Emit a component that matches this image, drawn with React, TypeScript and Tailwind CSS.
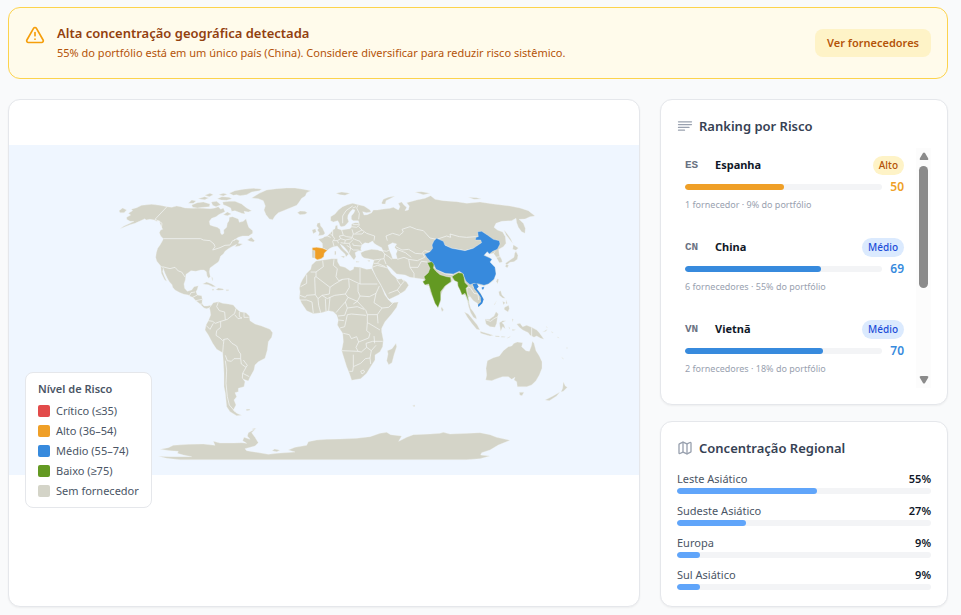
import { AlertTriangle, Map } from 'lucide-react';
import clsx from 'clsx';

// ==========================================================================
// Types
// ==========================================================================

interface CountryRisk {
  code: string;
  name: string;
  score: number;
  level: 'Alto' | 'Médio';
  detail: string;
}

interface RegionShare {
  name: string;
  share: number;
}

// ==========================================================================
// Data
// ==========================================================================

const countries: CountryRisk[] = [
  { code: 'ES', name: 'Espanha', score: 50, level: 'Alto', detail: '1 fornecedor · 9% do portfólio' },
  { code: 'CN', name: 'China', score: 69, level: 'Médio', detail: '6 fornecedores · 55% do portfólio' },
  { code: 'VN', name: 'Vietnã', score: 70, level: 'Médio', detail: '2 fornecedores · 18% do portfólio' },
];

const regions: RegionShare[] = [
  { name: 'Leste Asiático', share: 55 },
  { name: 'Sudeste Asiático', share: 27 },
  { name: 'Europa', share: 9 },
  { name: 'Sul Asiático', share: 9 },
];

const legend = [
  { label: 'Crítico (≤35)', color: 'bg-[#e24b4a]' },
  { label: 'Alto (36–54)', color: 'bg-[#ef9f27]' },
  { label: 'Médio (55–74)', color: 'bg-[#378add]' },
  { label: 'Baixo (≥75)', color: 'bg-[#639922]' },
  { label: 'Sem fornecedor', color: 'bg-[#d4d4c8]' },
];

const levelStyles = {
  Alto: { badge: 'bg-[#fef3c7] text-[#b45309]', bar: 'bg-[#ef9f27]', score: 'text-[#ef9f27]' },
  Médio: { badge: 'bg-[#dbeafe] text-[#1d4ed8]', bar: 'bg-[#378add]', score: 'text-[#378add]' },
};

// ==========================================================================
// World map
// ==========================================================================

const northAmerica = [
  'M50,112 62,105 55,100 68,92 64,88 80,83 95,76 125,73 150,76 171,80 185,82 200,78 212,80 225,84 250,85 262,84 280,85 300,86 315,84 325,80 332,88 340,84 345,95 338,98 328,103 318,110 305,115 298,124 300,135 308,138 322,142 330,148 332,160 336,164 342,160 341,150 350,142 352,130 357,122 358,112 368,110 385,117 388,127 400,124 408,116 412,130 416,142 428,152 428,160 416,168 398,168 385,172 372,180 380,178 388,182 385,190 398,192 388,198 375,200 380,193 365,200 355,206 345,214 340,222 332,228 328,240 325,246 312,255 300,264 298,275 301,290 296,295 291,288 289,275 282,270 272,270 258,274 243,272 235,278 228,283 226,300 222,312 224,325 232,334 245,330 252,320 265,317 262,328 258,335 262,345 275,347 277,358 276,370 282,378 292,378 302,376 302,382 290,386 282,384 270,372 258,362 248,352 240,349 235,345 222,343 210,338 195,330 188,322 186,314 178,305 172,295 165,280 160,266 152,258 140,243 137,232 139,218 143,205 150,195 157,183 160,176 152,168 148,158 152,150 158,148 154,140 150,130 148,122 140,124 133,120 120,118 108,120 105,116 88,124 75,130 60,134 45,140 30,146 42,138 60,130 72,124 60,124 50,118Z',
  'M152,258 160,264 158,275 163,288 170,304 164,300 158,288 154,280Z',
  'M245,75 262,68 280,66 300,72 298,80 280,82 262,84 248,82Z',
  'M235,70 245,60 258,63 250,70Z',
  'M264,56 284,50 296,54 284,59Z',
  'M284,46 300,40 310,44 298,50Z',
  'M304,66 320,64 332,74 318,80 308,76Z',
  'M322,56 336,50 357,52 366,56 350,61 334,60Z',
  'M326,44 340,40 352,43 340,48Z',
  'M338,66 358,64 375,64 395,72 410,84 425,92 415,96 402,94 405,102 395,100 385,96 375,92 365,94 362,84 350,78 340,74Z',
  'M358,40 375,32 400,28 430,25 455,27 448,32 425,36 410,44 390,47 380,44 370,46Z',
  'M340,104 352,96 364,102 352,107Z',
  'M412,180 424,172 434,182 430,186 418,183Z',
  'M27,92 38,84 50,90 42,98 30,98Z',
  'M278,312 290,306 305,312 318,320 308,320 295,314Z',
  'M317,329 325,324 338,326 342,330 325,331Z',
  'M348,329 356,329 356,332 348,332Z',
  'M306,328 312,328 312,331 306,331Z',
  'M305,290 308,294 308,302 306,300Z',
  // Greenland
  'M425,54 448,40 470,30 500,26 530,24 555,24 580,28 602,32 590,38 586,48 575,55 566,68 560,76 540,84 520,92 505,98 495,108 488,119 478,117 468,104 462,90 466,78 460,62 445,56Z',
];

const northAmericaBorders =
  'M171,80 135,118 148,124 156,130 154,145M160,176H272L280,180 300,182 312,192 315,200 308,210 330,203 345,196 360,195 368,182 375,180M157,260 180,266 195,262 205,273 215,276 225,291M238,348 243,338 255,336M248,352 262,345M258,362 276,358M270,372 278,372';

const southAmerica = [
  'M58,54 70,38 85,35 98,40 115,42 130,45 138,55 150,65 168,68 178,78 180,92 195,102 215,108 240,118 248,128 245,142 235,155 232,180 225,205 205,215 195,225 192,240 180,262 175,273 160,268 157,264 165,275 162,290 145,295 145,305 135,308 140,320 132,330 138,345 130,360 140,370 155,376 140,377 120,365 110,350 108,330 106,310 102,290 102,250 100,215 98,188 80,178 68,160 55,135 45,120 48,105 55,92 62,75 60,60Z',
  'M168,358 180,357 179,361 170,362Z',
  'M186,417 198,414 192,420Z',
];

const southAmericaBorders =
  'M85,36 80,50 88,62 104,66 106,90 92,94 M138,55 134,70 124,78 112,88 106,90M148,66 148,80 156,84M162,68 162,82 176,82M156,84 144,86 134,74M55,92 68,94 76,100 92,94 92,112 80,122 78,136 90,144 98,152 102,148 100,164 98,188M48,106 60,118 70,100M102,148 114,146 126,160 140,168 146,184 152,192 152,206 132,206 124,214 112,212 106,196M152,206 154,222 168,232 172,226 160,210M168,232 158,250 157,264M158,250 178,260M106,212 110,240 108,280 112,320 118,345 136,366';

const africa = [
  'M78,243 100,240 125,236 142,236 143,246 150,258 165,262 180,272 190,268 192,260 210,262 230,268 245,266 250,275 262,298 275,320 285,345 296,360 305,368 325,366 320,382 305,402 285,425 275,445 275,455 280,480 278,500 270,515 255,525 255,540 242,560 230,580 212,596 185,601 178,580 170,560 162,535 155,512 160,485 158,460 148,445 142,435 145,420 140,405 130,395 115,392 95,398 70,401 50,392 35,370 28,355 30,335 28,325 32,310 38,298 50,280 62,268 65,255Z',
  'M318,490 320,500 312,525 306,548 296,554 290,542 294,522 292,512 306,506Z',
];

const africaBorders =
  'M62,276 78,276 78,290 120,322 134,312 158,298M78,276 100,260 98,242M132,238 130,256 142,266 138,290 146,302 158,298 176,296 210,312V264M210,312H262M78,290 74,292 76,344 50,346 46,352 30,346M50,284 50,310 32,320M120,322 118,342 96,346 84,356 76,344M176,296 178,322 166,342 134,346 120,352M166,342 174,352 202,364 210,348 204,334 204,312M210,348 238,350 258,340 268,318M258,340 252,368 276,384 262,404 232,404 228,392 202,364M276,384 296,382 312,366M262,404 264,430M232,404 232,428 240,432 270,450M174,352 166,366 172,384 202,380 222,388M166,366 148,386 138,398M172,384 164,406 144,408M84,356 86,376 92,398M106,356 108,394M96,346 112,356 120,352 116,392M50,360 66,366 70,400M30,360 50,360M172,404 164,440 150,444M146,420 162,422M172,404 184,402 228,406 M160,460 178,464 184,476 200,470 206,486 198,502 204,514 156,512M232,428 230,452 240,460 236,474 206,486M204,514 214,516 230,502 244,512 240,534 226,536 212,550 190,560 188,574 178,574M190,524V560M230,502 228,490 248,484M252,468 254,490M244,512 258,496M248,484 278,484M240,534 242,552M202,364 190,372M212,574 220,570 224,576 216,582Z';

const eurasia = [
  // mainland Europe and Asia
  'M67,203 98,205 97,190 88,181 85,178 98,174 104,170 112,168 118,162 125,155 128,150 135,146 136,138 142,135 143,146 155,150 168,148 180,146 184,142 185,132 195,128 207,128 205,122 190,122 184,118 184,108 192,98 195,90 188,88 180,96 174,106 173,115 176,125 170,132 164,138 155,140 150,138 147,128 143,122 130,126 122,122 122,110 135,102 145,90 158,80 172,74 188,70 205,74 222,78 240,90 243,96 230,98 218,95 222,105 232,104 245,98 250,90 262,90 275,88 300,85 310,82 325,90 330,80 325,70 335,66 342,75 350,82 345,92 355,90 358,78 350,68 380,60 405,55 422,47 435,58 460,62 500,65 530,70 570,66 610,72 660,78 690,84 715,92 735,108 720,110 705,117 687,118 700,130 706,145 705,160 695,155 685,142 680,128 678,115 665,122 635,124 618,130 612,142 622,150 638,156 646,170 648,190 640,200 626,208 628,226 635,238 637,246 628,248 622,238 615,226 610,220 600,222 590,215 584,226 598,232 604,240 600,248 615,262 618,280 612,300 600,310 582,318 565,314 552,312 560,325 572,340 580,358 576,370 566,380 562,370 550,362 542,352 536,350 538,370 542,385 550,395 558,408 560,418 550,412 542,398 536,380 532,362 525,345 515,345 510,330 503,318 500,305 490,300 482,308 470,315 458,332 453,345 452,365 444,382 435,372 428,352 420,335 417,318 405,315 398,305 402,298 390,296 360,292 345,285 320,282 310,272 300,262 290,255 293,265 305,282 315,290 322,298 335,296 350,306 356,316 345,332 325,345 298,358 292,352 285,338 270,310 258,290 250,272 246,262 250,250 252,240 235,236 222,234 215,228 212,218 225,212 245,208 265,210 280,215 275,203 260,195 252,190 248,183 235,190 225,188 215,195 212,208 215,212 205,212 195,218 198,230 192,240 185,232 178,222 172,212 162,200 155,195 150,192 158,205 172,218 176,222 168,230 165,222 152,210 142,198 130,200 120,205 112,211 103,219 102,230 95,236 80,239 76,235 66,233 66,215Z',
  'M82,130 90,128 92,138 98,145 105,160 100,165 85,167 88,158 82,150 86,145 80,138Z',
  'M66,150 76,146 79,155 70,161Z',
  'M22,98 30,93 45,94 52,98 45,103 30,104Z',
  'M138,40 155,36 180,40 165,46 150,44Z',
  'M275,68 280,58 295,52 315,48 300,56 288,62 286,72 276,72Z',
  'M375,36 395,35 420,40 400,44Z',
  'M535,52 560,53 574,57 552,58Z',
  'M152,229 164,228 162,234Z',
  'M134,214 138,213 138,224 134,224Z',
  'M198,244 208,245 206,247 198,247Z',
  'M232,242 240,240 238,245Z',
  // Sakhalin and Japan
  'M642,150 652,162 662,176 668,190 660,180 648,164Z',
  'M670,194 685,204 678,211 668,208Z',
  'M678,214 684,226 682,238 672,245 660,247 650,255 646,250 660,240 672,232 674,220Z',
  'M648,253 656,256 652,263 646,260Z',
  'M622,296 626,298 623,312 619,304Z',
];

const eurasiaBorders =
  'M120,160 128,168 134,176 128,184 132,198M112,168 122,172M128,150 128,168M155,150 160,166 148,168 152,176 142,182 130,182M160,166 170,170 186,172 190,162 186,148M184,140 200,142 208,136 206,128M206,140 216,150 196,160M188,134 206,134M186,172 194,178 210,184 216,194M190,162 216,162 222,156M216,150 230,160 254,168 252,182M152,176 166,180 186,176M166,180 164,190 152,188M164,190 178,190 190,178M188,190 190,196 214,198M178,190 182,204 190,210 206,210M170,196 182,204 178,218M142,182 146,190M205,74 200,84 208,100 206,118M188,84 198,80M158,130 158,108 168,92 188,78M98,204 112,211M252,240 268,238 282,236 284,222 278,214M265,210 290,214 298,210M284,222 296,230 306,238M252,250 262,250 272,238M262,250 286,260M246,262 262,256M282,236 288,252M262,256 286,262M286,262 292,264M322,238 342,232 356,238 360,262 372,280 372,294M356,238 382,242 404,232M360,262 384,262 394,244 412,246M320,208 346,218 364,232M318,200 336,210 356,208 376,220 398,222M404,232 398,218 404,212 420,216M292,182 288,168 308,160 328,166 340,156 336,148 360,140 380,148 400,152 420,174 440,178M440,178 470,168 482,172 480,162 508,170 530,172 556,170 564,172M440,178 452,184 465,196 485,205 525,212 550,205M432,262 444,270 468,282 488,284M482,290 490,304M532,320 542,324 552,340 564,342 566,360M532,320 530,340 542,352M548,318 566,340M320,298 332,316 322,330 296,340M322,330 332,342M335,296 342,304 332,316M615,214 610,222M618,232 630,230';

const oceania = [
  'M185,80 191,90 186,95 183,86Z',
  'M253,96 265,102 278,118 292,135 300,150 290,148 275,130 262,112Z',
  'M300,154 320,160 340,166 330,168 302,160Z',
  'M346,167 358,168 358,171 346,170Z',
  'M364,169 376,170 374,172 364,172Z',
  'M380,175 392,168 386,174Z',
  'M315,118 328,118 342,108 348,95 355,102 352,115 350,130 345,142 330,140 318,132Z',
  'M358,128 368,122 378,122 366,128 372,134 376,146 368,140 362,154 360,142Z',
  'M386,140 390,144 388,148Z',
  'M396,116 400,118 398,126Z',
  'M396,148 408,149 398,152Z',
  'M410,132 420,130 428,140 440,136 455,142 470,150 478,158 492,178 482,175 470,168 462,172 450,166 445,158 428,150 418,142Z',
  'M488,156 502,148 498,154Z',
  'M498,138 504,144 500,142Z',
  'M514,154 520,158 516,158Z',
  'M532,170 538,174 534,174Z',
  'M544,230 552,238 548,236Z',
  'M560,202 563,204 560,206Z',
  'M356,35 362,32 366,45 376,55 368,54 358,46Z',
  'M350,62 344,74 342,74Z',
  'M368,64 376,68 370,74Z',
  'M378,60 382,70 378,72Z',
  'M374,82 386,76 388,86 384,96 372,88Z',
  'M317,300 320,285 318,265 322,242 340,233 358,228 370,212 385,200 395,198 402,190 412,186 428,188 425,200 438,212 448,214 454,198 457,184 462,190 468,212 478,228 486,245 486,265 478,285 468,302 455,315 440,320 422,320 412,320 410,305 402,300 405,292 395,298 385,290 368,290 350,296 335,302Z',
  'M418,337 432,337 426,347 419,345Z',
  'M550,305 556,318 562,322 550,334 543,336 548,325Z',
  'M540,336 530,348 508,362 495,360 515,350Z',
  'M98,376 105,376 103,380 99,379Z',
];

const antarctica = [
  'M60,148 85,143 100,136 145,133 190,132 225,136 220,124 240,129 280,129 305,128 320,130 308,122 312,112 330,118 322,108 325,98 347,86 335,98 345,112 355,128 345,138 315,146 320,152 350,157 385,163 410,160 465,156 445,150 465,142 500,136 505,125 530,120 560,118 600,117 650,115 690,110 720,100 740,97 752,104 785,108 776,124 800,112 820,104 870,102 900,100 910,97 930,102 985,100 1020,98 1050,104 1070,112 1110,121 1075,135 1050,150 1025,158 1022,165 1050,168 1020,176 980,179 120,179 80,175 55,169 90,170 155,170 130,165 112,160 115,154 90,152Z',
  'M396,152 404,147 420,151 410,155Z',
  'M820,16 825,16 824,20Z',
];

const spain = 'M67,203 80,202 98,205 112,211 103,219 101,230 93,236 82,239 75,235 75,212 67,210Z';

const china =
  'M440,175 460,184 465,196 485,205 525,212 550,205 560,198 575,188 572,180 556,180 558,172 565,170 563,155 575,154 592,165 610,178 628,182 630,192 622,208 608,214 598,222 592,215 582,226 600,234 606,238 600,246 615,262 618,282 612,298 595,312 582,316 568,312 552,310 540,314 528,304 522,290 520,282 508,274 490,282 465,280 438,268 432,255 422,245 410,232 404,222 420,215 428,205 426,195 432,182ZM575,322 583,320 581,328 576,329Z';

const indiaAndMyanmar =
  'M412,248 426,245 432,254 430,264 438,274 450,284 470,290 482,292 483,305 465,318 452,335 452,360 444,383 435,370 426,345 420,325 416,312 405,315 398,305 406,300 402,290 415,278 420,265ZM486,290 494,284 505,278 518,280 522,292 525,308 535,318 528,325 532,345 536,365 538,372 530,350 525,340 516,345 510,330 504,318 503,306 494,302Z';

const vietnam =
  'M548,312 560,310 566,320 560,326 572,342 581,358 577,370 565,381 564,374 573,366 572,352 563,338 553,326Z';

function Land({ paths }: { paths: string[] }) {
  return (
    <>
      {paths.map((d) => (
        <path key={d} d={d} />
      ))}
    </>
  );
}

function WorldMap() {
  return (
    <svg viewBox="0 0 1890 990" className="block w-full bg-[#eff6ff]" role="img" aria-label="Mapa de risco por país">
      <g fill="#d4d4c8" stroke="#f2f5f6" strokeWidth="1" strokeLinejoin="round">
        <g transform="translate(303 105)">
          <Land paths={northAmerica} />
          <path d={northAmericaBorders} fill="none" strokeWidth="2.2" />
        </g>
        <g transform="translate(543 435)">
          <Land paths={southAmerica} />
          <path d={southAmericaBorders} fill="none" strokeWidth="2.2" />
        </g>
        <g transform="translate(843 105)">
          <Land paths={africa} />
          <path d={africaBorders} fill="none" strokeWidth="2.2" />
          <Land paths={eurasia} />
          <path d={eurasiaBorders} fill="none" strokeWidth="2.2" />
          {/* Caspian Sea */}
          <path
            d="M294,196 308,188 320,192 314,202 322,212 318,222 322,236 308,236 304,224 298,210Z"
            fill="#eff6ff"
          />
          <path d={spain} fill="#ef9f27" />
          <path d={china} fill="#378add" />
          <path d={indiaAndMyanmar} fill="#639922" />
          <path d={vietnam} fill="#378add" stroke="none" />
        </g>
        <g transform="translate(1113 405)">
          <Land paths={oceania} />
          <path d="M455,142V168M318,120 332,124 342,116 354,110" fill="none" strokeWidth="2.2" />
        </g>
        <g transform="translate(393 765)">
          <Land paths={antarctica} />
        </g>
      </g>
    </svg>
  );
}

// ==========================================================================
// Panels
// ==========================================================================

function ConcentrationAlert() {
  return (
    <div
      role="alert"
      className="flex items-center gap-3 rounded-xl border border-[#fcd34d] bg-[#fffbeb] px-4 py-[15px]"
    >
      <AlertTriangle className="mt-0.5 size-5 shrink-0 self-start text-[#f59e0b]" />
      <div className="min-w-0 flex-1">
        <p className="text-[13px] leading-5 font-semibold text-[#92400e]">Alta concentração geográfica detectada</p>
        <p className="text-[11px] leading-5 text-[#b45309]">
          55% do portfólio está em um único país (China). Considere diversificar para reduzir risco sistêmico.
        </p>
      </div>
      <button
        type="button"
        className="shrink-0 rounded-lg bg-[#fef3c7] px-3 py-1 text-[11px] leading-5 font-semibold text-[#b45309]"
      >
        Ver fornecedores
      </button>
    </div>
  );
}

function MapLegend() {
  return (
    <div className="absolute bottom-3 left-4 rounded-lg border border-gray-200 bg-white/95 px-3 py-2">
      <p className="mb-1.5 text-[11px] leading-4 font-semibold text-gray-600">Nível de Risco</p>
      <ul className="space-y-1">
        {legend.map((item) => (
          <li key={item.label} className="flex items-center gap-1.5 text-[11px] leading-4 text-gray-600">
            <span className={clsx('size-3 rounded-xs', item.color)} />
            {item.label}
          </li>
        ))}
      </ul>
    </div>
  );
}

function RankingIcon() {
  return (
    <svg viewBox="0 0 16 16" className="size-4 text-gray-400" fill="none" stroke="currentColor" strokeLinecap="round">
      <path d="M1.5 3.8h13M1.5 6.6h13M1.5 9.4h10.5M1.5 12.2h6" strokeWidth="1.3" />
    </svg>
  );
}

function RiskRanking() {
  return (
    <section className="rounded-xl border border-gray-200 bg-white p-4 shadow-xs">
      <h2 className="flex items-center gap-1.5 text-[13px] leading-5 font-semibold text-gray-700">
        <RankingIcon />
        Ranking por Risco
      </h2>
      <div className="mt-3 flex h-60 overflow-hidden">
        <ul className="flex-1 space-y-2.5 pr-1">
          {countries.map((country) => {
            const style = levelStyles[country.level];
            return (
              <li key={country.code} className="p-2">
                <div className="flex items-center">
                  <span className="w-[30px] font-['Liberation_Mono',monospace] text-[11px] font-bold text-gray-500">
                    {country.code}
                  </span>
                  <span className="flex-1 text-[11px] font-bold text-gray-900">{country.name}</span>
                  <span
                    className={clsx('rounded-full px-1.5 py-0.5 text-[10px] leading-[15px] font-medium', style.badge)}
                  >
                    {country.level}
                  </span>
                </div>
                <div className="mt-1 flex items-center gap-2">
                  <div className="h-1.5 flex-1 overflow-hidden rounded-full bg-gray-100">
                    <div className={clsx('h-full rounded-full', style.bar)} style={{ width: `${country.score}%` }} />
                  </div>
                  <span className={clsx('text-[12px] leading-4 font-semibold', style.score)}>{country.score}</span>
                </div>
                <p className="mt-0.5 text-[9px] leading-[15px] text-gray-400">{country.detail}</p>
              </li>
            );
          })}
        </ul>
        {/* Scrollbar */}
        <div className="flex w-[15px] flex-col items-center bg-[#fcfcfc] py-1" aria-hidden="true">
          <svg viewBox="0 0 10 8" className="h-2 w-2.5 fill-[#8b8b8b]">
            <path d="M4,1Q5,0 6,1L9,6Q10,8 8,8H2Q0,8 1,6Z" />
          </svg>
          <div className="mt-1.5 h-[122px] w-[9px] rounded-full bg-[#8b8b8b]" />
          <svg viewBox="0 0 10 8" className="mt-auto h-2 w-2.5 fill-[#8b8b8b]">
            <path d="M4,7Q5,8 6,7L9,2Q10,0 8,0H2Q0,0 1,2Z" />
          </svg>
        </div>
      </div>
    </section>
  );
}

function RegionalConcentration() {
  return (
    <section className="rounded-xl border border-gray-200 bg-white p-4 shadow-xs">
      <h2 className="flex items-center gap-1.5 text-[13px] leading-5 font-semibold text-gray-700">
        <Map className="size-4 text-gray-400" />
        Concentração Regional
      </h2>
      <ul className="mt-3 space-y-2">
        {regions.map((region) => (
          <li key={region.name}>
            <div className="flex justify-between text-[11px] leading-[18px]">
              <span className="text-gray-600">{region.name}</span>
              <span className="font-semibold text-gray-900">{region.share}%</span>
            </div>
            <div className="h-1.5 overflow-hidden rounded-full bg-gray-100">
              <div className="h-full rounded-full bg-[#60a5fa]" style={{ width: `${region.share}%` }} />
            </div>
          </li>
        ))}
      </ul>
    </section>
  );
}

export default function App() {
  return (
    <main className="min-h-screen bg-gray-50 pt-[7px] pr-[13px] pb-2 pl-2 font-['Noto_Sans',sans-serif]">
      <ConcentrationAlert />
      <div className="mt-5 grid grid-cols-[minmax(0,1fr)_288px] gap-5">
        <section className="overflow-hidden rounded-xl border border-gray-200 bg-white shadow-xs">
          <div className="relative flex min-h-[420px] items-center">
            <WorldMap />
            <MapLegend />
          </div>
        </section>
        <aside className="space-y-4">
          <RiskRanking />
          <RegionalConcentration />
        </aside>
      </div>
    </main>
  );
}
